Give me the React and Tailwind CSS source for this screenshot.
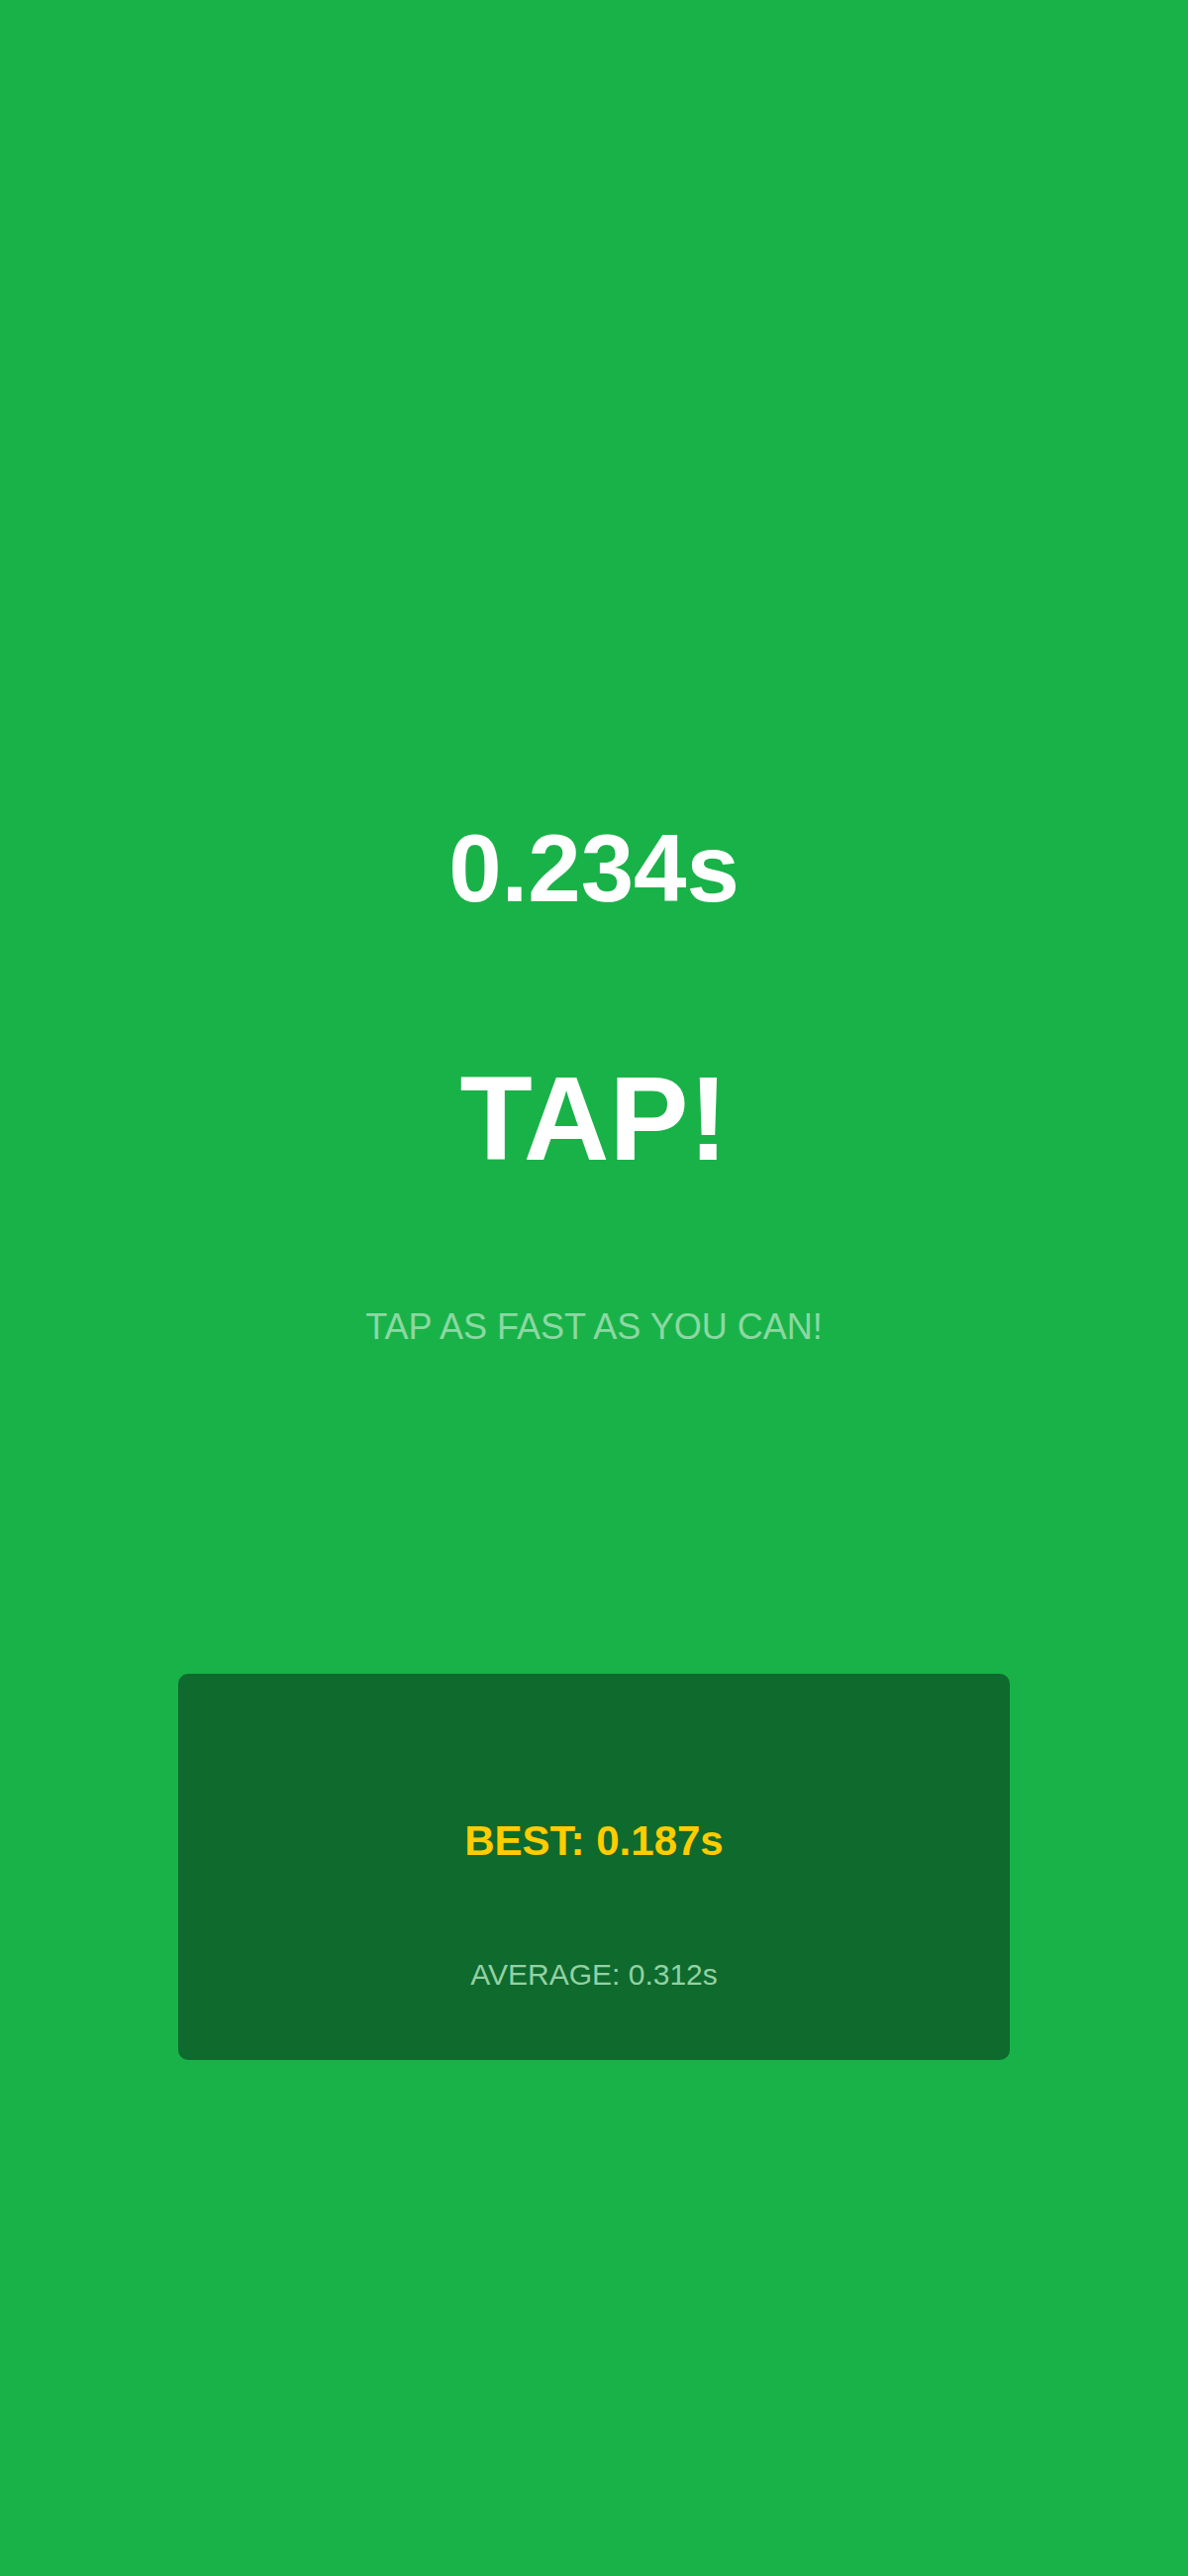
const App = () => {
    const current = "0.234s";
    const best = "0.187s";
    const average = "0.312s";

    return (
        <div
            className="min-h-[2601px] w-full bg-[#19b248] flex flex-col items-center pt-[829px]"
            style={{ fontFamily: '"Liberation Sans", Arial, sans-serif' }}
        >
            {/* Last reaction time */}
            <div className="text-white text-[96px] font-bold leading-none">{current}</div>

            {/* Tap prompt */}
            <div className="mt-[144px] text-white text-[120px] font-bold leading-none">TAP!</div>

            <div className="mt-[133px] text-white/50 text-[36px] leading-none">TAP AS FAST AS YOU CAN!</div>

            {/* Stats card */}
            <div className="mt-[332px] w-[840px] h-[390px] bg-[#0f6a2e] rounded-[10px] flex flex-col items-center pt-[148px]">
                <div className="text-[#ffcc00] text-[42px] font-bold leading-none">BEST: {best}</div>
                <div className="mt-[99px] text-[#93d1a2] text-[30px] leading-none">AVERAGE: {average}</div>
            </div>
        </div>
    );
};

export default App;
